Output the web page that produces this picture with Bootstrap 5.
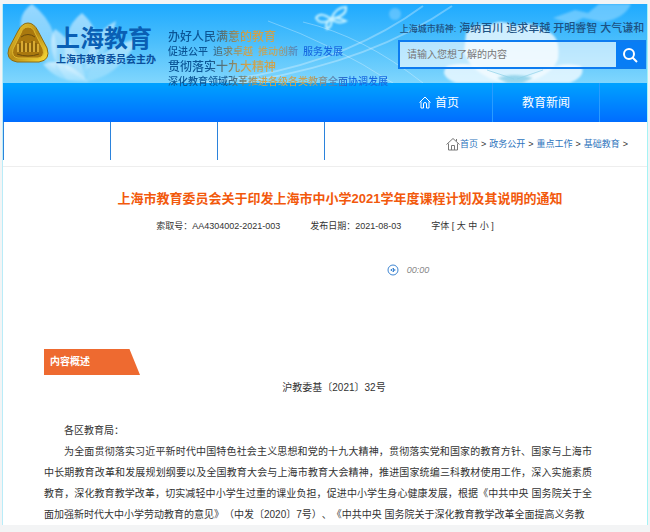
<!DOCTYPE html>
<html lang="zh-CN">
<head>
<meta charset="utf-8">
<meta name="viewport" content="width=device-width, initial-scale=1">
<title>上海教育</title>
<link href="https://cdn.jsdelivr.net/npm/bootstrap@5.3.0/dist/css/bootstrap.min.css" rel="stylesheet">
<style>
body{background:#f3f4f5;font-family:"Liberation Sans","Noto Sans CJK SC",sans-serif;font-size:10px;color:#333;padding:4px 2px 8px 2px;text-spacing-trim:space-all}
.sheet{background:#fff;border-left:1px solid #b9ecf8;border-right:1px solid #a5f3f5}
.banner{height:79px;background:linear-gradient(#1eaaff,#48bdfc 45%,#80d6fd)}
.banner-art{position:absolute;inset:0;width:100%;height:100%}
.banner-body{position:relative;padding-left:4px}
.emblem{width:42px;height:42px;margin-top:18px}
.site-name{font-size:24px;line-height:28px;color:#0a5fb4}
.site-host{font-size:10px;line-height:14px;color:#0a4f9c}
.brand-box{margin:21px 0 0 7px}
.slogans{margin:25px 0 0 12px;font-weight:500;white-space:nowrap}
.slogans span{-webkit-background-clip:text;background-clip:text;color:transparent;display:block;width:fit-content}
.s-large{font-size:12px;line-height:16px;background-image:linear-gradient(90deg,#0a5596 38%,#d0a14a 72%)}
.s-small{font-size:10px;line-height:14px}
.s-tri{background-image:linear-gradient(90deg,#0a5596 22%,#cfa14c 44%,#c7a357 62%,#1668e0 78%)}
.s-wide{background-image:linear-gradient(90deg,#0a5596 25%,#cfa14c 42%,#c7a357 64%,#1668e0 82%)}
.spirit{font-size:11px;line-height:14px;color:#1d5283;white-space:nowrap;margin-top:17px;font-weight:500;gap:3px}
.spirit small{font-size:9px}
.finder{width:248px;margin-right:1px}
.search-form{border:2px solid #0d7cf0;height:29px;margin-top:4px}
.search-form .form-control{font-size:10px;padding:0 7px;background:#ffffff99;color:#555}
.search-form .form-control::placeholder{color:#777}
.search-form .btn{width:28px;background:#087df5}
.main-nav{height:39px;background:linear-gradient(#00a2ff,#006dff);padding-right:47px}
.main-nav .nav-link{width:107px;height:39px;font-size:12px;color:#fff;border-right:1px solid #2a9cff}
.sub-row{height:45px;border-bottom:1px solid #eee}
.sub-row .slot{width:107px;height:38px;border-left:1px solid #2b83dc;flex:none}
.crumbs{margin:0 19px 0 auto;font-size:9px;line-height:14px;padding-top:15px;gap:3px;white-space:nowrap}
.crumbs a{color:#2e74bd}
.doc-title{font-size:13px;line-height:20px;color:#f2590c;margin-top:22px;padding-left:30px}
.doc-meta{font-size:9px;line-height:14px;margin-top:10px;gap:30px}
.doc-meta button{font-size:9px;line-height:14px;color:#333}
.player{margin-top:30px;gap:8px;font-size:9px;line-height:14px;color:#888;padding-left:166px}
.ribbon{background:#ee6a30;color:#fff;font-size:10px;line-height:26px;width:96px;padding-left:6px;clip-path:polygon(0 0,89% 0,100% 100%,0 100%);margin:72px 0 0 41px}
.doc-body{margin:2px 55px 0 41px;line-height:21px;text-align:justify}
.doc-number{padding-left:32px}
.doc-body p{text-indent:2em}
.addressee{margin:22px 0 0}
</style>
</head>
<body>
<div class="sheet">
<header class="banner position-relative">
<svg class="banner-art" viewBox="0 0 644 79" preserveAspectRatio="none" aria-hidden="true">
<defs><filter id="soft" x="-20%" y="-20%" width="140%" height="140%"><feGaussianBlur stdDeviation="1"/></filter>
<linearGradient id="petal" x1="0" y1="0" x2="0" y2="1"><stop offset="0" stop-color="#fff" stop-opacity=".55"/><stop offset="1" stop-color="#fff" stop-opacity=".15"/></linearGradient></defs>
<g filter="url(#soft)" fill="url(#petal)">
<path d="M29 0C16 9 14 22 24 40L52 66Q60 24 29 0Z"/><path d="M79 9Q57 25 63 65L81 76Q109 36 79 9Z"/><path d="M52 25Q40 45 64 76L83 77Q75 40 52 25Z"/><path d="M40 60Q62 52 86 78Q55 80 40 60Z"/><path d="M135 35Q92 43 82 78Q116 73 135 35Z"/><path d="M113 17Q85 31 82 67Q106 53 113 17Z"/>
</g>
<g filter="url(#soft)" fill="#f2fbff" fill-opacity=".8">
<path d="M463 30Q470 17 485 22Q498 14 512 22Q528 15 543 27Q558 31 555 55Q549 72 520 79H500Q468 70 461 48Z"/><path d="M444 62Q475 54 508 79H453Q435 72 444 62Z"/><path d="M578 62Q552 55 516 79H567Q584 72 578 62Z"/>
</g>
<g fill="none" stroke="#fff" stroke-opacity=".3"><path d="M195 79Q330 68 420 2M235 79Q365 60 449 2" stroke-width="2"/><path d="M265 17Q330 40 390 79M300 18Q360 32 420 79"/></g>
<path d="M494 74Q512 68 530 74L520 79H504Z" fill="#58b9da" fill-opacity=".5" filter="url(#soft)"/>
<path d="M511 75L484 66M514 75L540 66" fill="none" stroke="#8ed2e8" stroke-opacity=".7"/>
<g fill="none" stroke="#c9f3ff" stroke-width="2" filter="url(#soft)"><path d="M328 15Q317 7 313 14Q318 22 328 15Q333 3 343 3Q344 12 328 15Q336 13 343 17Q336 21 328 15Q330 22 324 25Q321 20 328 15"/></g>
<path d="M550 14L572 6L585 9L596 0H628Q622 14 600 18L580 14L568 20Z" fill="#a6e0ff" fill-opacity=".5" filter="url(#soft)"/>
<circle cx="392" cy="10" r="6" fill="#8fd6ff" fill-opacity=".5" filter="url(#soft)"/>
</svg>
<div class="banner-body d-flex">
<svg class="emblem flex-shrink-0" viewBox="0 0 42 42" role="img" aria-label="徽标">
<defs><linearGradient id="gold" x2="1" y2="1"><stop stop-color="#f5d43a"/><stop offset=".5" stop-color="#b98c14"/><stop offset="1" stop-color="#ffe13a"/></linearGradient></defs>
<path d="M21 1Q27 1 31 9L40 26Q44 38 32 40H10Q-2 38 2 26L11 9Q15 1 21 1Z" fill="url(#gold)" stroke="#8c6b12"/>
<path d="M21 5Q26 5 28 11L36 27Q38 35 31 36H11Q4 35 6 27L14 11Q16 5 21 5Z" fill="#a9780e" stroke="#e0b92f"/>
<path d="M11 22V30M15 19V30M19 21V30M23 21V30M27 19V30M31 22V30" stroke="#d9ab32" stroke-width="2"/><path d="M13 21V30M17 19V30M21 21V30M25 19V30M29 21V30M10 32Q21 36 32 32M14 15Q21 10 28 15" fill="none" stroke="#6b4c0c"/>
</svg>
<div class="brand-box flex-shrink-0"><div class="site-name fw-bold">上海教育</div><div class="site-host fw-bold">上海市教育委员会主办</div></div>
<div class="slogans"><span class="s-large">办好人民满意的教育</span><span class="s-small s-tri">促进公平&ensp;追求卓越&ensp;推动创新&ensp;服务发展</span><span class="s-large">贯彻落实十九大精神</span><span class="s-small s-wide">深化教育领域改革推进各级各类教育全面协调发展</span></div>
<div class="finder ms-auto flex-shrink-0">
<div class="spirit d-flex align-items-baseline justify-content-center"><small>上海城市精神:</small><span>海纳百川</span><span>追求卓越</span><span>开明睿智</span><span>大气谦和</span></div>
<form class="search-form d-flex"><input class="form-control border-0 rounded-0" type="search" aria-label="搜索内容" placeholder="请输入您想了解的内容"><button class="btn border-0 rounded-0 p-0 d-flex align-items-center justify-content-center flex-shrink-0" type="button" aria-label="搜索"><svg width="16" height="16" viewBox="0 0 16 16" fill="none" stroke="#fff" stroke-width="2"><circle cx="7" cy="7" r="5"/><path d="M10.5 10.5L15 15"/></svg></button></form>
</div>
</div>
</header>
<nav class="main-nav d-flex justify-content-end" aria-label="主导航">
<a class="nav-link d-flex align-items-center justify-content-center gap-1 p-0" href="#"><svg width="12" height="13" viewBox="0 0 12 13" fill="none" stroke="#fff"><path d="M.5 6.5L6 1L11.500 6.500M2 5.500V12H4.500V8Q4.500 6.500 6 6.500T7.500 8V12H10V5.500"/></svg>首页</a>
<a class="nav-link d-flex align-items-center justify-content-center p-0" href="#">教育新闻</a>
</nav>
<div class="sub-row d-flex"><div class="slot"></div><div class="slot"></div><div class="slot"></div><div class="slot w-auto"></div>
<nav class="crumbs d-flex align-items-start" aria-label="当前位置"><a class="text-decoration-none d-flex align-items-center" href="#"><svg width="14" height="14" viewBox="0 0 14 14" fill="none" stroke="#777"><path d="M.5 7.500L7 1.500L13.500 7.500M2.500 6.500V13H11.500V6.500M5.500 13V8.500H8.500V13M10.500 4V2"/></svg>首页</a><span>&gt;</span><a class="text-decoration-none" href="#">政务公开</a><span>&gt;</span><a class="text-decoration-none" href="#">重点工作</a><span>&gt;</span><a class="text-decoration-none" href="#">基础教育</a><span>&gt;</span></nav>
</div>
<main>
<h1 class="doc-title fw-bold text-center mb-0">上海市教育委员会关于印发上海市中小学2021学年度课程计划及其说明的通知</h1>
<div class="doc-meta d-flex justify-content-center"><span>索取号：AA4304002-2021-003</span><span>发布日期：2021-08-03</span><span>字体 [ <button class="btn p-0 border-0 align-baseline" type="button">大</button> <button class="btn p-0 border-0 align-baseline" type="button">中</button> <button class="btn p-0 border-0 align-baseline" type="button">小</button> ]</span></div>
<div class="player d-flex justify-content-center align-items-center"><svg width="12" height="12" viewBox="0 0 12 12" fill="none" stroke="#3f86d2"><circle cx="6" cy="6" r="5"/><path d="M4 5.500H5L6.500 4V8L5 6.500H4ZM7.500 5Q8.500 6 7.500 7"/></svg><em>00:00</em></div>
<h2 class="ribbon fw-bold mb-0">内容概述</h2>
<article class="doc-body"><div class="doc-number text-center">沪教委基〔2021〕32号</div><p class="addressee">各区教育局：</p>
<p class="mb-0">为全面贯彻落实习近平新时代中国特色社会主义思想和党的十九大精神，贯彻落实党和国家的教育方针、国家与上海市中长期教育改革和发展规划纲要以及全国教育大会与上海市教育大会精神，推进国家统编三科教材使用工作，深入实施素质教育，深化教育教学改革，切实减轻中小学生过重的课业负担，促进中小学生身心健康发展，根据《中共中央 国务院关于全面加强新时代大中小学劳动教育的意见》（中发〔2020〕7号）、《中共中央 国务院关于深化教育教学改革全面提高义务教</p></article>
</main>
</div>
<script src="https://cdn.jsdelivr.net/npm/bootstrap@5.3.0/dist/js/bootstrap.bundle.min.js"></script>
</body>
</html>
